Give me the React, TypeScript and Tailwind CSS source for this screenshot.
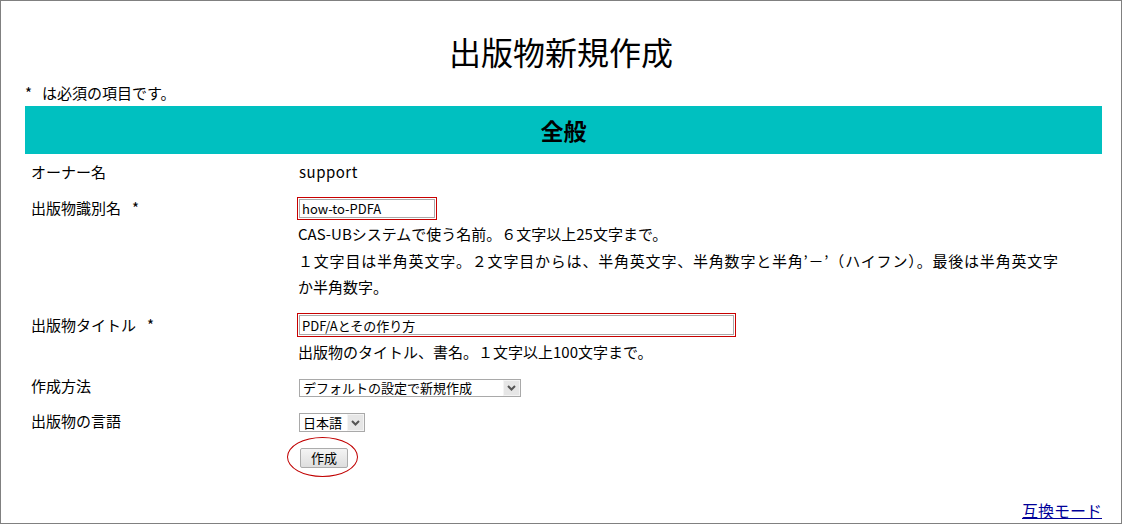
import React from "react";

function Chevron() {
  return (
    <svg width="9" height="6" viewBox="0 0 9 6" className="block">
      <path d="M1 1 L4.5 4.5 L8 1" fill="none" stroke="#555" strokeWidth="2" />
    </svg>
  );
}

function FakeSelect({ width, height, text }: { width: string; height: string; text: string }) {
  return (
    <div className={`${width} ${height} border border-[#a9a9a9] bg-white flex items-stretch`}>
      <div className="flex-1 pl-[3px] text-[13px] leading-[14px] flex items-center whitespace-nowrap">
        {text}
      </div>
      <div className="w-[17px] bg-[#e6e6e6] border border-[#f4f4f4] flex items-center justify-center">
        <Chevron />
      </div>
    </div>
  );
}

export default function App() {
  return (
    <div className="w-[1122px] h-[524px] border border-[#808080] bg-white flex flex-col font-['Noto_Sans_CJK_JP','Noto_Sans',sans-serif] text-black">
      <h1 className="pt-[30px] text-center text-[32px] leading-[40px] font-normal">出版物新規作成</h1>
      <div className="ml-[24px] mt-[12px] text-[15px] leading-[20px]">
        <span className="inline-block w-[17px]">*</span>は必須の項目です。
      </div>
      <div className="ml-[24px] mt-[3px] w-[1077px] h-[48px] bg-[#00c0c0] flex items-center justify-center text-[23px] font-bold">
        全般
      </div>

      <div className="ml-[24px] w-[1077px] text-[15px] leading-[26px]">
        {/* owner */}
        <div className="flex h-[38px]">
          <div className="w-[272px] pl-[6px] pt-[5px]">オーナー名</div>
          <div className="pt-[5px] pl-[2px] tracking-[0.5px]">support</div>
        </div>

        {/* identifier */}
        <div className="flex h-[119px]">
          <div className="w-[272px] pl-[6px] pt-[3px]">
            出版物識別名<span className="ml-[11px]">*</span>
          </div>
          <div className="pt-[5px]">
            <div className="w-[140px] h-[23px] border border-[#c80000] p-px">
              <div className="h-full border border-[#a9a9a9] pl-[2px] text-[13px] leading-[15px] flex items-center">
                how-to-PDFA
              </div>
            </div>
            <div className="mt-[1px] pl-[1px] leading-[26.5px] whitespace-nowrap">
              CAS-UBシステムで使う名前。６文字以上25文字まで。
              <br />
              <span className="tracking-[0.8px]">
                １文字目は半角英文字。２文字目からは、半角英文字、半角数字と半角’－’（ハイフン）。最後は半角英文字
              </span>
              <br />
              か半角数字。
            </div>
          </div>
        </div>

        {/* title */}
        <div className="flex h-[55px]">
          <div className="w-[272px] pl-[6px] pt-[1px]">
            出版物タイトル<span className="ml-[11px]">*</span>
          </div>
          <div className="pt-[2px]">
            <div className="w-[439px] h-[24px] border border-[#c80000] p-px">
              <div className="h-full border border-[#a9a9a9] pl-[2px] text-[13px] leading-[15px] flex items-center">
                PDF/Aとその作り方
              </div>
            </div>
            <div className="mt-[2px] pl-[1px] whitespace-nowrap">出版物のタイトル、書名。１文字以上100文字まで。</div>
          </div>
        </div>

        {/* method */}
        <div className="flex h-[35px]">
          <div className="w-[272px] pl-[6px] pt-[7px]">作成方法</div>
          <div className="pt-[13px] pl-[2px]">
            <FakeSelect width="w-[222px]" height="h-[18px]" text="デフォルトの設定で新規作成" />
          </div>
        </div>

        {/* language */}
        <div className="flex h-[36px]">
          <div className="w-[272px] pl-[6px] pt-[7px]">出版物の言語</div>
          <div className="pt-[12px] pl-[2px]">
            <FakeSelect width="w-[66px]" height="h-[19px]" text="日本語" />
          </div>
        </div>

        {/* button */}
        <div className="flex">
          <div className="w-[272px]"></div>
          <div className="pt-[11px] pl-[3px]">
            <div className="relative">
              <button className="w-[48px] h-[20px] border border-[#acacac] rounded-[2px] bg-gradient-to-b from-[#f4f4f4] to-[#dedede] text-[13px] leading-[16px] flex items-center justify-center">
                作成
              </button>
              <div className="absolute left-[-13px] top-[-11px] w-[71px] h-[40px] rounded-[50%] border-[1.5px] border-[#c00000] pointer-events-none"></div>
            </div>
          </div>
        </div>
      </div>

      <div className="mt-auto ml-[24px] w-[1077px] flex justify-end pb-[3px]">
        <a href="#" className="text-[16px] leading-[20px] text-[#000099] underline">
          互換モード
        </a>
      </div>
    </div>
  );
}
